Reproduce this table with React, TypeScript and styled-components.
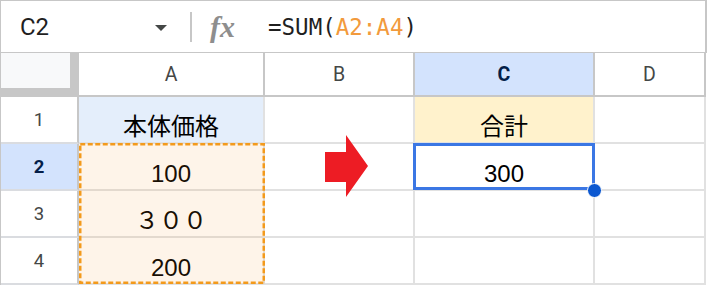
import React from 'react'
import styled, { createGlobalStyle } from 'styled-components'

const columns = ['A', 'B', 'C', 'D']

interface RowData {
  n: number
  cells: string[]
}

const rows: RowData[] = [
  { n: 1, cells: ['本体価格', '', '合計', ''] },
  { n: 2, cells: ['100', '', '300', ''] },
  { n: 3, cells: ['３００', '', '', ''] },
  { n: 4, cells: ['200', '', '', ''] },
]

// cell fills by "row:col"
const fills: Record<string, string> = {
  '1:0': '#e4eefb',
  '1:2': '#fff2cc',
}

const activeCol = 2
const activeRow = 2

const App: React.FC = () => {
  return (
    <>
      <GlobalStyle />
      <Sheet>
        <FormulaBar>
          <NameBox>
            <span>C2</span>
            <Caret />
          </NameBox>
          <Divider />
          <FxLabel>fx</FxLabel>
          <Formula>
            =SUM(<Ref>A2:A4</Ref>)
          </Formula>
        </FormulaBar>

        <Grid>
          <Corner />
          {columns.map((c, i) => (
            <ColHead key={c} $col={i + 2} $active={i === activeCol}>
              {c}
            </ColHead>
          ))}

          {rows.map((r) => (
            <React.Fragment key={r.n}>
              <RowHead $row={r.n + 1} $active={r.n === activeRow}>
                {r.n}
              </RowHead>
              {r.cells.map((v, i) => (
                <Cell key={i} $col={i + 2} $row={r.n + 1} $bg={fills[`${r.n}:${i}`]}>
                  {v}
                </Cell>
              ))}
            </React.Fragment>
          ))}

          <RangeMark>
            <svg width="186" height="141">
              <rect
                x="1.25"
                y="1.25"
                width="183.5"
                height="138.5"
                fill="none"
                stroke="#f39a1c"
                strokeWidth="2.5"
                strokeDasharray="5 2.5"
              />
            </svg>
          </RangeMark>

          <ArrowSlot>
            <svg width="44" height="63" viewBox="0 0 44 63">
              <polygon points="0,17 21,17 21,0 43,31 21,62 21,47 0,47" fill="#ed1c24" />
            </svg>
          </ArrowSlot>

          <Selection>
            <FillHandle />
          </Selection>
        </Grid>
      </Sheet>
    </>
  )
}

export default App

const GlobalStyle = createGlobalStyle`
  html, body {
    margin: 0;
    padding: 0;
    background: #fff;
  }
  body {
    font-family: Roboto, "Liberation Sans", "Noto Sans CJK JP", sans-serif;
  }
`

const Sheet = styled.div`
  width: 706px;
  border-left: 1px solid #c7c7c7;
`

const FormulaBar = styled.div`
  display: flex;
  align-items: center;
  height: 53px;
  box-sizing: border-box;
  border-top: 1px solid #c7c7c7;
  border-bottom: 1px solid #c7c7c7;
  border-right: 2px solid #c7c7c7;
`

const NameBox = styled.div`
  display: flex;
  align-items: center;
  justify-content: space-between;
  width: 170px;
  box-sizing: border-box;
  padding: 0 4px 0 19px;
  font-family: Roboto, "Liberation Sans", sans-serif;
  font-size: 24px;
  color: #1f1f1f;
`

const Caret = styled.span`
  width: 0;
  height: 0;
  margin-top: 2px;
  border-left: 6.5px solid transparent;
  border-right: 6.5px solid transparent;
  border-top: 6.5px solid #444746;
`

const Divider = styled.div`
  width: 2px;
  height: 30px;
  margin-left: 19px;
  background: #c7c7c7;
`

const FxLabel = styled.span`
  margin-left: 18px;
  width: 30px;
  font-family: "Liberation Serif", serif;
  font-style: italic;
  font-weight: bold;
  font-size: 30px;
  line-height: 1;
  color: #8e8e8e;
`

const Formula = styled.span`
  margin-left: 28px;
  font-family: "DejaVu Sans Mono", "Liberation Mono", monospace;
  font-size: 22.5px;
  color: #1f1f1f;
`

const Ref = styled.span`
  color: #f29a3c;
`

const Grid = styled.div`
  display: grid;
  grid-template-columns: 78px 186px 150px 180px 111px;
  grid-template-rows: 44px repeat(4, 47px);
`

const Corner = styled.div`
  grid-column: 1;
  grid-row: 1;
  background: #f8f9fa;
  border-right: 9px solid #c7c7c7;
  border-bottom: 9px solid #c7c7c7;
`

const ColHead = styled.div<{ $col: number; $active: boolean }>`
  grid-column: ${(p) => p.$col};
  grid-row: 1;
  display: flex;
  align-items: center;
  justify-content: center;
  background: ${(p) => (p.$active ? '#d3e3fd' : '#fff')};
  border-right: 2px solid #c7c7c7;
  border-bottom: 2px solid #c7c7c7;
  font-size: 19.5px;
  font-weight: ${(p) => (p.$active ? 700 : 400)};
  color: ${(p) => (p.$active ? '#041e49' : '#444746')};
`

const RowHead = styled.div<{ $row: number; $active: boolean }>`
  grid-column: 1;
  grid-row: ${(p) => p.$row};
  display: flex;
  align-items: center;
  justify-content: center;
  background: ${(p) => (p.$active ? '#d3e3fd' : '#fff')};
  border-right: 2px solid #c7c7c7;
  border-bottom: 2px solid #dadce0;
  font-size: 18.5px;
  font-weight: ${(p) => (p.$active ? 700 : 400)};
  color: ${(p) => (p.$active ? '#041e49' : '#444746')};
`

const Cell = styled.div<{ $col: number; $row: number; $bg?: string }>`
  grid-column: ${(p) => p.$col};
  grid-row: ${(p) => p.$row};
  display: flex;
  align-items: flex-end;
  justify-content: center;
  padding-bottom: 1px;
  background: ${(p) => p.$bg ?? '#fff'};
  border-right: 2px solid #e1e1e1;
  border-bottom: 2px solid #e1e1e1;
  font-family: "Liberation Sans", "Noto Sans CJK JP", sans-serif;
  font-size: 24px;
  line-height: 28px;
  color: #000;
`

// copied range A2:A4
const RangeMark = styled.div`
  grid-column: 2;
  grid-row: 3 / 6;
  margin: -1px 0 1px 0;
  background: rgba(244, 150, 40, 0.1);
  pointer-events: none;

  svg {
    display: block;
  }
`

const ArrowSlot = styled.div`
  grid-column: 3;
  grid-row: 2 / 5;
  display: flex;
  align-items: center;
  justify-content: center;
  padding: 0 0 3px 13px;
  pointer-events: none;
`

// active cell C2
const Selection = styled.div`
  grid-column: 4;
  grid-row: 3;
  position: relative;
  margin: -1px 0 1px -2px;
  border: 3px solid #3b77e4;
  pointer-events: none;
`

const FillHandle = styled.span`
  position: absolute;
  right: -10px;
  bottom: -11px;
  width: 15px;
  height: 15px;
  box-sizing: border-box;
  border-radius: 50%;
  background: #0b57d0;
  border: 1px solid #fff;
`
